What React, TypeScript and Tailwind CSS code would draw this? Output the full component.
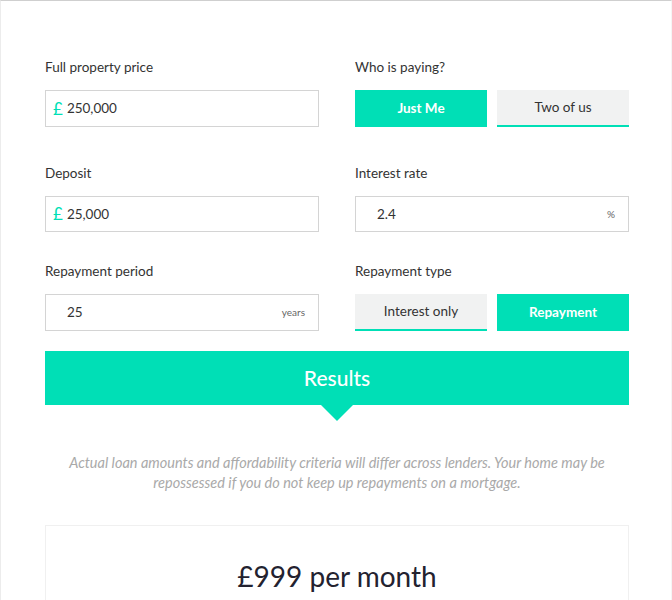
import React from "react";

const font = { fontFamily: "Lato, 'Noto Sans', sans-serif" };

function Label({ children }: { children: React.ReactNode }) {
  return <div className="h-5 text-[13.5px] leading-5 text-[#333] mb-[13px]">{children}</div>;
}

export default function App() {
  return (
    <div style={font} className="w-[672px] h-[600px] bg-white border-t border-t-[#cfcfcf] border-l border-l-[#ececec] border-r border-r-[#f5f5f5] overflow-hidden">
      <div className="pl-[44px] pr-[42px] pt-[56px]">
        <div className="grid grid-cols-2 gap-x-[36px]">
          <div>
            <Label>Full property price</Label>
            <div className="h-[37px] border border-[#d4d4d4] flex items-center pl-[7px]">
              <span className="text-[#00dfb6] text-[17px] mr-[4px]">£</span>
              <span className="text-[13.5px] text-[#333]">250,000</span>
            </div>
          </div>
          <div>
            <Label>Who is paying?</Label>
            <div className="flex gap-[10px] h-[37px]">
              <div className="flex-1 bg-[#00dfb6] text-white text-[13.5px] font-bold flex items-center justify-center">Just Me</div>
              <div className="flex-1 bg-[#f1f2f2] border-b-2 border-[#00dfb6] text-[13.5px] text-[#333] flex items-center justify-center">Two of us</div>
            </div>
          </div>
        </div>

        <div className="grid grid-cols-2 gap-x-[36px] mt-[36px]">
          <div>
            <Label>Deposit</Label>
            <div className="h-[36px] border border-[#d4d4d4] flex items-center pl-[7px]">
              <span className="text-[#00dfb6] text-[17px] mr-[4px]">£</span>
              <span className="text-[13.5px] text-[#333]">25,000</span>
            </div>
          </div>
          <div>
            <Label>Interest rate</Label>
            <div className="h-[36px] border border-[#d4d4d4] flex items-center pl-[21px] pr-[13px]">
              <span className="text-[13.5px] text-[#333] flex-1">2.4</span>
              <span className="text-[10px] text-[#666]">%</span>
            </div>
          </div>
        </div>

        <div className="grid grid-cols-2 gap-x-[36px] mt-[29px]">
          <div>
            <Label>Repayment period</Label>
            <div className="h-[37px] border border-[#d4d4d4] flex items-center pl-[21px] pr-[13px]">
              <span className="text-[13.5px] text-[#333] flex-1">25</span>
              <span className="text-[10px] text-[#666]">years</span>
            </div>
          </div>
          <div>
            <Label>Repayment type</Label>
            <div className="flex gap-[10px] h-[37px]">
              <div className="flex-1 bg-[#f1f2f2] border-b-2 border-[#00dfb6] text-[13.5px] text-[#333] flex items-center justify-center">Interest only</div>
              <div className="flex-1 bg-[#00dfb6] text-white text-[13.5px] font-bold flex items-center justify-center">Repayment</div>
            </div>
          </div>
        </div>

        <div className="relative mt-[20px] h-[54px] bg-[#00dfb6] flex items-center justify-center">
          <span className="text-white text-[21px] font-medium">Results</span>
          <div className="absolute left-1/2 -translate-x-1/2 top-full w-0 h-0 border-l-[16px] border-r-[16px] border-t-[16px] border-l-transparent border-r-transparent border-t-[#00dfb6]" />
        </div>

        <p className="mt-[48px] px-[14px] text-center italic text-[14.5px] leading-5 text-[#a9a9a9]">
          Actual loan amounts and affordability criteria will differ across lenders. Your home may be repossessed if you do not keep up repayments on a mortgage.
        </p>

        <div className="mt-[32px] border border-[#f0f0f0] h-[120px] pt-[29px] text-center">
          <span className="text-[28px] text-[#23222f]">£999 per month</span>
        </div>
      </div>
    </div>
  );
}
